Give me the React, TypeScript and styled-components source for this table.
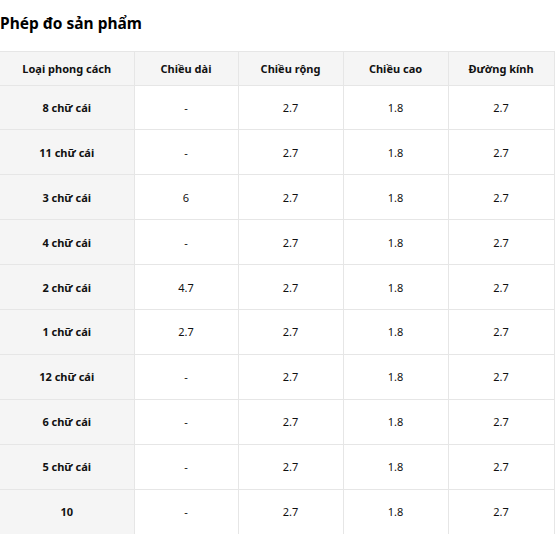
import React from "react";
import styled, { createGlobalStyle } from "styled-components";

const GlobalStyle = createGlobalStyle`
  body {
    margin: 0;
    background: #ffffff;
    font-family: "Noto Sans", "Open Sans", sans-serif;
    color: #111111;
  }
`;

const Page = styled.div`
  width: 555px;
  overflow: hidden;
`;

const Title = styled.h2`
  margin: 0;
  padding: 12px 0 0 0;
  height: 51px;
  box-sizing: border-box;
  font-size: 15.5px;
  font-weight: 700;
  line-height: 22px;
  color: #000;
`;

const Table = styled.table`
  border-collapse: collapse;
  table-layout: fixed;
  width: 554px;
`;

const Col = styled.col<{ $w: number }>`
  width: ${(p) => p.$w}px;
`;

const HeadCell = styled.th<{ $first?: boolean }>`
  height: 32.6px;
  padding: 0 4px;
  border: 1px solid #e6e6e6;
  border-left: ${(p) => (p.$first ? "none" : "1px solid #e6e6e6")};
  background: #f5f5f5;
  font-size: 11px;
  font-weight: 700;
  text-align: center;
  vertical-align: middle;
`;

const Cell = styled.td<{ $label?: boolean }>`
  height: 43.9px;
  padding: 0 4px;
  border: 1px solid #e6e6e6;
  border-left: ${(p) => (p.$label ? "none" : "1px solid #e6e6e6")};
  background: ${(p) => (p.$label ? "#f5f5f5" : "#ffffff")};
  font-size: 11px;
  font-weight: ${(p) => (p.$label ? 700 : 400)};
  text-align: center;
  vertical-align: middle;
`;

const headers = ["Loại phong cách", "Chiều dài", "Chiều rộng", "Chiều cao", "Đường kính"];
const widths = [134, 104, 105, 105, 106];

const rows: [string, string][] = [
  ["8 chữ cái", "-"],
  ["11 chữ cái", "-"],
  ["3 chữ cái", "6"],
  ["4 chữ cái", "-"],
  ["2 chữ cái", "4.7"],
  ["1 chữ cái", "2.7"],
  ["12 chữ cái", "-"],
  ["6 chữ cái", "-"],
  ["5 chữ cái", "-"],
  ["10", "-"],
];

export default function App() {
  return (
    <Page>
      <GlobalStyle />
      <Title>Phép đo sản phẩm</Title>
      <Table>
        <colgroup>
          {widths.map((w, i) => (
            <Col key={i} $w={w} />
          ))}
        </colgroup>
        <thead>
          <tr>
            {headers.map((h, i) => (
              <HeadCell key={h} $first={i === 0}>
                {h}
              </HeadCell>
            ))}
          </tr>
        </thead>
        <tbody>
          {rows.map(([label, length]) => (
            <tr key={label}>
              <Cell $label>{label}</Cell>
              <Cell>{length}</Cell>
              <Cell>2.7</Cell>
              <Cell>1.8</Cell>
              <Cell>2.7</Cell>
            </tr>
          ))}
        </tbody>
      </Table>
    </Page>
  );
}
